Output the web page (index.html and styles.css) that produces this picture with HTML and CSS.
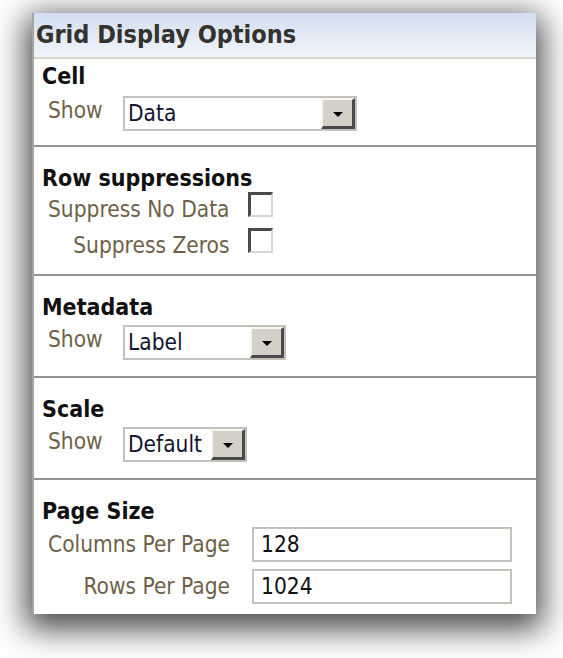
FILE: index.html
```html
<!DOCTYPE html>
<html>
<head>
    <title>Grid Display Options</title>
    <link rel="stylesheet" href="styles.css">
</head>
<body>
    <div class="options-panel">
        <div class="panel-header">Grid Display Options</div>

        <div class="section section-first">
            <div class="section-title">Cell</div>
            <div class="field-row">
                <span class="field-label">Show</span>
                <div class="dropdown dropdown-wide">
                    <span class="dropdown-value">Data</span>
                    <span class="dropdown-button"><span class="arrow"></span></span>
                </div>
            </div>
        </div>

        <div class="section section-checks">
            <div class="section-title">Row suppressions</div>
            <div class="field-grid check-grid">
                <span class="field-label">Suppress No Data</span>
                <span class="checkbox"></span>
                <span class="field-label">Suppress Zeros</span>
                <span class="checkbox"></span>
            </div>
        </div>

        <div class="section">
            <div class="section-title">Metadata</div>
            <div class="field-row">
                <span class="field-label">Show</span>
                <div class="dropdown dropdown-medium">
                    <span class="dropdown-value">Label</span>
                    <span class="dropdown-button"><span class="arrow"></span></span>
                </div>
            </div>
        </div>

        <div class="section">
            <div class="section-title">Scale</div>
            <div class="field-row">
                <span class="field-label">Show</span>
                <div class="dropdown dropdown-narrow">
                    <span class="dropdown-value">Default</span>
                    <span class="dropdown-button"><span class="arrow"></span></span>
                </div>
            </div>
        </div>

        <div class="section section-last">
            <div class="section-title">Page Size</div>
            <div class="field-grid input-grid">
                <span class="field-label">Columns Per Page</span>
                <span class="text-input">128</span>
                <span class="field-label">Rows Per Page</span>
                <span class="text-input">1024</span>
            </div>
        </div>
    </div>
</body>
</html>
```

FILE: styles.css
```css
html, body {
    min-height: 100%;
}

body {
    font-family: "DejaVu Sans Condensed", "DejaVu Sans", sans-serif;
    font-stretch: condensed;
    background: #fff;
    margin: 0;
    padding: 13px 0 44px 32px;
    box-sizing: border-box;
    min-height: 658px;
}

.options-panel {
    width: 504px;
    height: 601px;
    box-sizing: border-box;
    background: #fff;
    border-left: 2px solid #a4a4a0;
    box-shadow: 0 9px 30px 6px rgba(0,0,0,0.72);
}

.panel-header {
    height: 44px;
    line-height: 44px;
    padding-left: 2px;
    font-size: 25px;
    font-weight: bold;
    color: #34322e;
    background: linear-gradient(#d2deef, #f1f5fb);
    border-bottom: 2px solid #d6d6c8;
}

.section {
    padding: 18px 0 16px 8px;
    border-bottom: 2px solid #939393;
}

.section-first {
    padding-top: 4px;
    padding-bottom: 14px;
}

.section-last {
    padding-bottom: 10px;
    border-bottom: none;
}

.section-title {
    font-size: 23px;
    line-height: 26px;
    font-weight: bold;
    color: #111;
    margin-bottom: 5px;
}

.section-first .section-title {
    margin-bottom: 7px;
}

.section-checks .section-title {
    margin-bottom: 1px;
}

.section-last .section-title {
    margin-bottom: 3px;
}

.field-label {
    font-size: 22.5px;
    line-height: 26px;
    color: #6e6148;
}

.field-row {
    display: flex;
    align-items: flex-start;
    padding-left: 6px;
}

.field-row .field-label {
    padding-top: 1px;
    width: 75px;
}

.field-grid {
    display: grid;
    grid-template-columns: auto auto;
    justify-content: start;
    align-items: baseline;
    padding-left: 6px;
}

.field-grid .field-label {
    text-align: right;
}

.check-grid {
    column-gap: 19px;
    row-gap: 6px;
}

.input-grid {
    column-gap: 22px;
    row-gap: 7px;
}

.dropdown {
    display: flex;
    height: 35px;
    border: 2px solid #c2c2ba;
    box-sizing: border-box;
    background: #fff;
}

.dropdown-wide {
    width: 234px;
}

.dropdown-medium {
    width: 163px;
}

.dropdown-narrow {
    width: 124px;
}

.dropdown-value {
    flex: 1;
    padding-left: 3px;
    font-size: 22.5px;
    line-height: 31px;
    color: #141430;
}

.dropdown-button {
    width: 34px;
    display: flex;
    align-items: center;
    justify-content: center;
    background: #d4d0c8;
    border-top: 2px solid #f6f5f2;
    border-left: 2px solid #f6f5f2;
    border-right: 3px solid #4a4a4a;
    border-bottom: 3px solid #4a4a4a;
    box-sizing: border-box;
}

.arrow {
    width: 0;
    height: 0;
    margin-top: 3px;
    border-left: 5px solid transparent;
    border-right: 5px solid transparent;
    border-top: 5px solid #000;
}

.checkbox {
    display: inline-block;
    width: 25px;
    height: 25px;
    box-sizing: border-box;
    background: #fff;
    border-style: solid;
    border-width: 3px 2px 2px 3px;
    border-color: #4a4a4a #d8d6ce #d8d6ce #4a4a4a;
}

.text-input {
    display: inline-block;
    width: 260px;
    height: 35px;
    box-sizing: border-box;
    border: 2px solid #c4c4bc;
    padding-left: 7px;
    font-size: 22.5px;
    line-height: 31px;
    color: #111;
}
```
